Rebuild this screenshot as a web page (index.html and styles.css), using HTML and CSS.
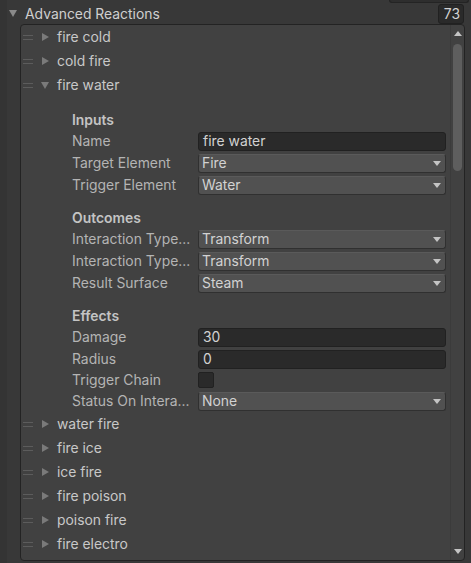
FILE: index.html
```html
<!DOCTYPE html>
<html lang="en">
<head>
    <meta charset="UTF-8">
    <title>Advanced Reactions</title>
    <link rel="stylesheet" href="styles.css">
</head>
<body>
    <div class="inspector">
        <div class="prev-field"></div>
        <div class="header">
            <span class="fold open"></span>
            <span class="header-title">Advanced Reactions</span>
            <span class="count">73</span>
        </div>

        <div class="list">
            <div class="items">
                <div class="item"><span class="handle"></span><span class="arrow"></span>fire cold</div>
                <div class="item"><span class="handle"></span><span class="arrow"></span>cold fire</div>
                <div class="item"><span class="handle"></span><span class="arrow down"></span>fire water</div>

                <div class="details">
                    <div class="section">
                        <div class="section-title">Inputs</div>
                        <div class="prop"><span class="label">Name</span><span class="field text">fire water</span></div>
                        <div class="prop"><span class="label">Target Element</span><span class="field dropdown">Fire</span></div>
                        <div class="prop"><span class="label">Trigger Element</span><span class="field dropdown">Water</span></div>
                    </div>
                    <div class="section">
                        <div class="section-title">Outcomes</div>
                        <div class="prop"><span class="label">Interaction Type...</span><span class="field dropdown">Transform</span></div>
                        <div class="prop"><span class="label">Interaction Type...</span><span class="field dropdown">Transform</span></div>
                        <div class="prop"><span class="label">Result Surface</span><span class="field dropdown">Steam</span></div>
                    </div>
                    <div class="section">
                        <div class="section-title">Effects</div>
                        <div class="prop"><span class="label">Damage</span><span class="field text">30</span></div>
                        <div class="prop"><span class="label">Radius</span><span class="field text">0</span></div>
                        <div class="prop short"><span class="label">Trigger Chain</span><span class="checkbox"></span></div>
                        <div class="prop"><span class="label">Status On Intera...</span><span class="field dropdown">None</span></div>
                    </div>
                </div>

                <div class="item"><span class="handle"></span><span class="arrow"></span>water fire</div>
                <div class="item"><span class="handle"></span><span class="arrow"></span>fire ice</div>
                <div class="item"><span class="handle"></span><span class="arrow"></span>ice fire</div>
                <div class="item"><span class="handle"></span><span class="arrow"></span>fire poison</div>
                <div class="item"><span class="handle"></span><span class="arrow"></span>poison fire</div>
                <div class="item"><span class="handle"></span><span class="arrow"></span>fire electro</div>
            </div>

            <div class="scrollbar">
                <span class="scroll-btn up"></span>
                <div class="track">
                    <div class="thumb"></div>
                </div>
                <span class="scroll-btn down"></span>
            </div>
        </div>
    </div>
</body>
</html>
```

FILE: styles.css
```css
:root {
    --bg: #383838;
    --list-bg: #414141;
    --border-dark: #232323;
    --text: #c8c8c8;
    --label: #b4b4b4;
    --field-dark: #2a2a2a;
    --dropdown: #515151;
    --icon: #7a7a7a;
}

* {
    margin: 0;
    padding: 0;
    box-sizing: border-box;
}

body {
    background-color: var(--bg);
    font-family: 'Inter', 'Noto Sans', sans-serif;
    font-size: 13.9px;
    color: var(--text);
    overflow: hidden;
}

.inspector {
    height: 563px;
    display: flex;
    flex-direction: column;
    border-left: 7px solid #343434;
}

.prev-field {
    height: 3px;
    margin-left: 382px;
    width: 80px;
    border: 1px solid #242424;
    border-top: none;
    border-radius: 0 0 3px 3px;
    background-color: #2e2e2e;
}

.header {
    height: 21px;
    display: flex;
    align-items: center;
    padding-left: 2px;
    padding-right: 7px;
}

.fold {
    width: 0;
    height: 0;
    border-left: 4px solid transparent;
    border-right: 4px solid transparent;
    border-top: 7px solid #8a8a8a;
    margin-right: 8px;
}

.header-title {
    flex: 1;
    color: #cfcfcf;
}

.count {
    width: 26px;
    height: 20px;
    line-height: 18px;
    text-align: right;
    padding-right: 3px;
    background-color: var(--field-dark);
    border: 1px solid #212121;
    border-radius: 3px;
    color: #d2d2d2;
    margin-top: 1px;
}

.list {
    margin-left: 13px;
    width: 445px;
    height: 537px;
    background-color: var(--list-bg);
    border: 1px solid var(--border-dark);
    border-radius: 4px;
    display: flex;
    overflow: hidden;
}

.items {
    flex: 1;
    overflow: hidden;
}

.item {
    height: 24px;
    display: flex;
    align-items: center;
    padding-left: 2px;
}

.handle {
    width: 10px;
    height: 5px;
    border-top: 1px solid #5c5c5c;
    border-bottom: 1px solid #5c5c5c;
    margin-right: 9px;
}

.arrow {
    width: 0;
    height: 0;
    border-top: 4px solid transparent;
    border-bottom: 4px solid transparent;
    border-left: 7px solid var(--icon);
    margin-right: 8px;
}

.arrow.down {
    border-left: 4px solid transparent;
    border-right: 4px solid transparent;
    border-top: 7px solid var(--icon);
    border-bottom: none;
    margin-left: -1px;
}

.details {
    padding: 13px 4px 0 51px;
}

.section + .section {
    margin-top: 12px;
}

.section-title {
    height: 20px;
    line-height: 20px;
    font-weight: 600;
    color: #c4c4c4;
}

.prop {
    height: 22px;
    display: flex;
    align-items: center;
}

.prop.short {
    height: 20px;
}

.label {
    width: 126px;
    color: var(--label);
    white-space: nowrap;
    overflow: hidden;
}

.field {
    flex: 1;
    height: 19px;
    line-height: 17px;
    border-radius: 3px;
    color: #d2d2d2;
    padding-left: 3px;
}

.field.text {
    background-color: var(--field-dark);
    border: 1px solid #212121;
    padding-left: 4px;
}

.field.dropdown {
    background-color: var(--dropdown);
    border: 1px solid #303030;
    border-top-color: #5a5a5a;
    display: flex;
    align-items: center;
    justify-content: space-between;
    padding-right: 4px;
}

.field.dropdown::after {
    content: '';
    border-left: 4px solid transparent;
    border-right: 4px solid transparent;
    border-top: 5px solid #c4c4c4;
}

.checkbox {
    width: 16px;
    height: 16px;
    background-color: var(--field-dark);
    border: 1px solid #212121;
    border-radius: 2px;
}

.scrollbar {
    width: 14px;
    border-left: 1px solid #3b3b3b;
    display: flex;
    flex-direction: column;
    align-items: center;
    padding: 6px 0 6px;
}

.scroll-btn {
    width: 0;
    height: 0;
    border-left: 4px solid transparent;
    border-right: 4px solid transparent;
}

.scroll-btn.up {
    border-bottom: 5px solid #c4c4c4;
}

.scroll-btn.down {
    border-top: 5px solid #c4c4c4;
}

.track {
    flex: 1;
    width: 100%;
    padding: 8px 1px;
}

.thumb {
    height: 127px;
    background-color: #5e5e5e;
    border-radius: 5px;
    margin: 0 1px;
}
```
